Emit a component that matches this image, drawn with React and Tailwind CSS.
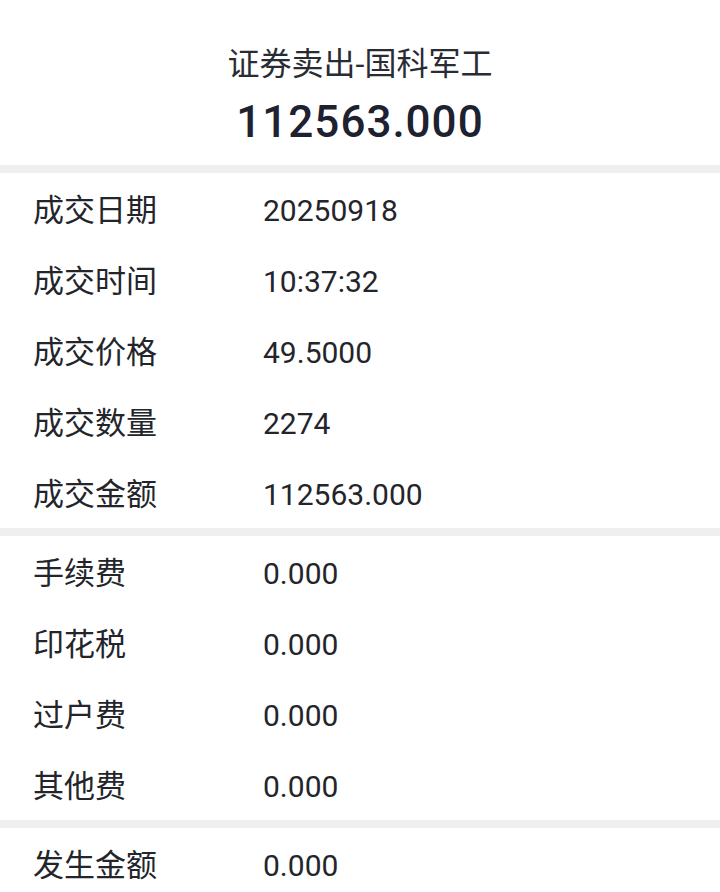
import React from 'react';

const font = { fontFamily: 'Roboto, "Noto Sans CJK SC", sans-serif' };

const sections = [
  [
    ['成交日期', '20250918'],
    ['成交时间', '10:37:32'],
    ['成交价格', '49.5000'],
    ['成交数量', '2274'],
    ['成交金额', '112563.000'],
  ],
  [
    ['手续费', '0.000'],
    ['印花税', '0.000'],
    ['过户费', '0.000'],
    ['其他费', '0.000'],
  ],
  [['发生金额', '0.000']],
];

function Row({ label, value }) {
  return (
    <div className="flex h-[71px] items-center pl-[33px] pt-[4px]">
      <div className="w-[230px] text-[31px] leading-[40px] text-[#23252b]">{label}</div>
      <div className="text-[30px] leading-[40px] text-[#23252b]">{value}</div>
    </div>
  );
}

export default function App() {
  return (
    <div className="w-[720px] h-[892px] overflow-hidden bg-white" style={font}>
      {/* Header */}
      <div className="flex h-[165px] flex-col items-center pt-[42px]">
        <div className="text-[32px] leading-[44px] text-[#2a2c33]">证券卖出-国科军工</div>
        <div className="mt-[8px] text-[44px] font-medium leading-[56px] tracking-[1px] text-[#1d2130]">112563.000</div>
      </div>

      {sections.map((rows, i) => (
        <div key={i}>
          <div className="h-[8px] bg-[#efefef]" />
          {rows.map(([l, v]) => (
            <Row key={l} label={l} value={v} />
          ))}
        </div>
      ))}
    </div>
  );
}
